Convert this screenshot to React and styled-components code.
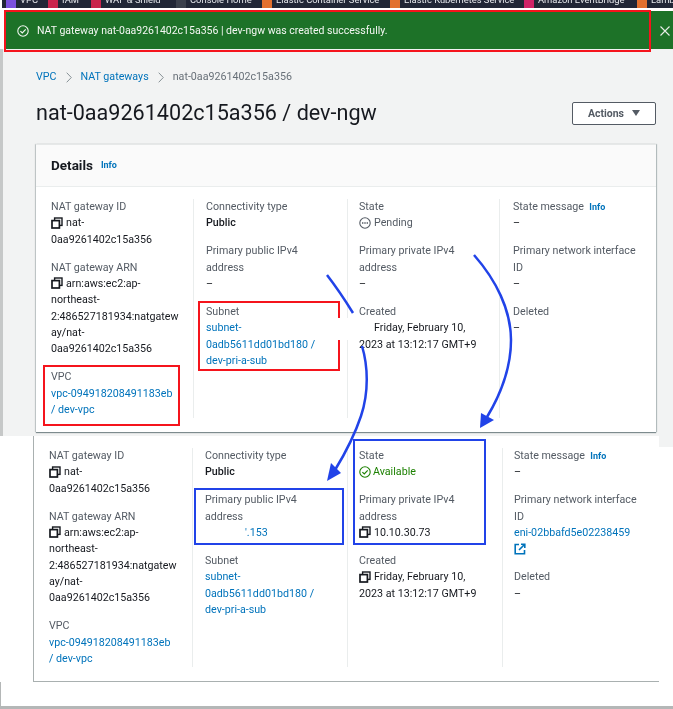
import React from "react";
import styled, { createGlobalStyle } from "styled-components";

const GlobalStyle = createGlobalStyle`
  html, body {
    margin: 0;
    padding: 0;
    background: #fff;
  }
  * {
    box-sizing: border-box;
  }
`;

const Page = styled.div`
  position: relative;
  width: 673px;
  height: 709px;
  overflow: hidden;
  background: #fff;
  font-family: Roboto, "Noto Sans", sans-serif;
  font-size: 10.7px;
  line-height: 16.3px;
  color: #16191f;
  filter: blur(0.35px);
`;

const Nav = styled.div`
  display: flex;
  height: 8px;
  margin-left: 2px;
  padding-left: 4px;
  overflow: hidden;
  background: #212636;
`;

const NavItem = styled.div`
  display: flex;
  flex: none;
  gap: 4px;
  width: ${(p) => p.$w}px;
  height: 8px;
  color: #e6e8ec;
  font-size: 9.4px;
  line-height: 10px;
  white-space: nowrap;

  span {
    margin-top: -5px;
  }
`;

const NavIcon = styled.i`
  flex: none;
  width: 10px;
  height: 8px;
  background: ${(p) => p.$color};
`;

const Banner = styled.div`
  display: flex;
  align-items: center;
  height: 38px;
  margin: 3px 0 0 5px;
  padding: 2px 0 0 12px;
  background: #1d7228;
  color: #f4f7f3;
  font-size: 10.5px;
`;

const BannerText = styled.span`
  margin-left: 6px;
  flex: 1;
`;

const CloseMark = styled.svg`
  width: 10px;
  height: 10px;
  margin-right: 3px;
`;

const Upper = styled.div`
  height: 387px;
  padding: 19px 17px 0 33px;
  border-left: 3px solid #c6c8c8;
  background: #f2f3f3;
`;

const Breadcrumb = styled.div`
  display: flex;
  align-items: center;
  gap: 9px;
  height: 18px;
  color: #687078;
`;

const Crumb = styled.a`
  color: #0073bb;
`;

const Chevron = styled.svg`
  width: 6px;
  height: 11px;
`;

const TitleRow = styled.div`
  display: flex;
  align-items: center;
  justify-content: space-between;
  height: 24px;
  margin-top: 15px;
`;

const Title = styled.h1`
  margin: 0;
  font-size: 21.6px;
  font-weight: 400;
  line-height: 24px;
  white-space: nowrap;
`;

const ActionsButton = styled.button`
  display: flex;
  align-items: center;
  justify-content: center;
  gap: 8px;
  width: 84px;
  height: 23px;
  border: 1.5px solid #545b64;
  border-radius: 2px;
  background: #fff;
  color: #545b64;
  font: 700 10.5px Roboto, sans-serif;
`;

const Caret = styled.i`
  width: 0;
  height: 0;
  border-top: 6px solid #545b64;
  border-left: 4px solid transparent;
  border-right: 4px solid transparent;
`;

const Card = styled.section`
  margin-top: 19px;
  height: 288px;
  background: #fff;
  border-top: 1px solid #e6e8e8;
  box-shadow: 0 1px 1px rgba(0, 28, 36, 0.45), 1px 0 1px rgba(0, 28, 36, 0.2),
    -1px 0 1px rgba(0, 28, 36, 0.15);
`;

const CardHeader = styled.header`
  display: flex;
  align-items: center;
  gap: 8px;
  height: 42px;
  padding-left: 15px;
  background: #fafafa;
  border-bottom: 1px solid #eaeded;
`;

const CardTitle = styled.h2`
  margin: 0;
  font-size: 13.5px;
  font-weight: 700;
`;

const Info = styled.a`
  color: #0073bb;
  font-size: 9px;
  font-weight: 700;
`;

const DetailGrid = styled.div`
  display: grid;
  grid-template-columns: ${(p) => p.$cols};
  padding-top: ${(p) => p.$top}px;
`;

const Column = styled.div`
  display: flex;
  flex-direction: column;
  gap: 11.8px;
  height: 219px;
  padding: 0 12px 0 ${(p) => p.$pad}px;
  border-left: ${(p) => (p.$first ? "none" : "1px solid #eaeded")};
  overflow-wrap: anywhere;
`;

const Field = styled.div``;

const Label = styled.div`
  color: #545b64;
`;

const Value = styled.div`
  font-weight: ${(p) => (p.$bold ? 500 : 400)};
  padding-left: ${(p) => p.$indent || 0}px;
`;

const Link = styled.a`
  color: #0073bb;
`;

const StatusText = styled.span`
  color: ${(p) => p.$color};
`;

const IconSlot = styled.svg`
  display: inline-block;
  width: 12px;
  height: 12px;
  margin-right: ${(p) => p.$gap ?? 3}px;
  vertical-align: -2.5px;
`;

const Lower = styled.div`
  height: 270px;
  background: #fff;
`;

const Panel = styled.section`
  width: 626px;
  height: 246px;
  margin-left: 33px;
  border-left: 1px solid #a9b0b0;
  border-bottom: 1px solid #a9b0b0;
`;

const LowerEdge = styled.div`
  height: 24px;
  border-left: 1px solid #b4b7b7;
`;

const Footer = styled.div`
  height: 3px;
  background: #b4b7b7;
`;

const GrayPatch = styled.div`
  position: absolute;
  left: 659px;
  top: 436px;
  width: 14px;
  height: 11px;
  background: #f2f3f3;
`;

const Callout = styled.div`
  position: absolute;
  left: ${(p) => p.$x}px;
  top: ${(p) => p.$y}px;
  width: ${(p) => p.$w}px;
  height: ${(p) => p.$h}px;
  border: 2.5px solid ${(p) => p.$color};
`;

const WhiteOut = styled.div`
  position: absolute;
  left: 336px;
  top: 318px;
  width: 38px;
  height: 22px;
  background: #fff;
`;

const ArrowLayer = styled.svg`
  position: absolute;
  left: 0;
  top: 0;
  width: 673px;
  height: 709px;
  pointer-events: none;
`;

const RED = "#f5141c";
const BLUE = "#2143e8";

const CopyIcon = () => (
  <IconSlot viewBox="0 0 12 12">
    <rect x="3.6" y="1" width="7.4" height="7.4" fill="none" stroke="#16191f" strokeWidth="1.4" />
    <rect x="1" y="3.6" width="7.4" height="7.4" fill="#fff" stroke="#16191f" strokeWidth="1.7" />
  </IconSlot>
);

const PendingIcon = () => (
  <IconSlot viewBox="0 0 12 12">
    <circle cx="6" cy="6" r="5.2" fill="none" stroke="#545b64" strokeWidth="1.1" />
    <path d="M3 6h6" stroke="#545b64" strokeWidth="1.3" strokeDasharray="1.4 .9" />
  </IconSlot>
);

const CheckIcon = ({ color }) => (
  <IconSlot viewBox="0 0 12 12" $gap={2}>
    <circle cx="6" cy="6" r="5.2" fill="none" stroke={color} strokeWidth="1.1" />
    <path d="M3.4 6.1l1.9 1.9 3.4-3.6" fill="none" stroke={color} strokeWidth="1.2" />
  </IconSlot>
);

const ExternalIcon = () => (
  <IconSlot viewBox="0 0 12 12">
    <path d="M5 1.5H1.2v9.3h9.3V7" fill="none" stroke="#0073bb" strokeWidth="1.6" />
    <path d="M7 1.2h3.8V5M10.5 1.5L5 7" fill="none" stroke="#0073bb" strokeWidth="1.6" />
  </IconSlot>
);

const Detail = ({ label, children }) => (
  <Field>
    <Label>{label}</Label>
    {children}
  </Field>
);

const Dash = () => <Value>–</Value>;

const GatewayColumn = ({ pad }) => (
  <Column $first $pad={pad}>
    <Detail label="NAT gateway ID">
      <Value><CopyIcon />nat-0aa9261402c15a356</Value>
    </Detail>
    <Detail label="NAT gateway ARN">
      <Value><CopyIcon />arn:aws:ec2:ap-northeast-2:486527181934:natgateway/nat-0aa9261402c15a356</Value>
    </Detail>
    <Detail label="VPC">
      <Value><Link>vpc-094918208491183eb<br />/ dev-vpc</Link></Value>
    </Detail>
  </Column>
);

const SubnetField = () => (
  <Detail label="Subnet">
    <Value><Link>subnet-0adb5611dd01bd180 / dev-pri-a-sub</Link></Value>
  </Detail>
);

const CreatedField = () => (
  <Detail label="Created">
    <Value><CopyIcon />Friday, February 10, 2023 at 13:12:17 GMT+9</Value>
  </Detail>
);

const navItems = [
  ["VPC", "#7a4fdc", 42],
  ["IAM", "#c9244c", 43],
  ["WAF & Shield", "#c9244c", 85],
  ["Console Home", "#3a3f4b", 86],
  ["Elastic Container Service", "#e2702e", 128],
  ["Elastic Kubernetes Service", "#e2702e", 134],
  ["Amazon EventBridge", "#cf2367", 113],
  ["Lambda", "#e2702e", 60],
];

export default function App() {
  return (
    <Page>
      <GlobalStyle />
      <Nav>
        {navItems.map(([name, color, w]) => (
          <NavItem key={name} $w={w}>
            <NavIcon $color={color} />
            <span>{name}</span>
          </NavItem>
        ))}
      </Nav>

      <Banner>
        <CheckIcon color="#f4f7f3" />
        <BannerText>NAT gateway nat-0aa9261402c15a356 | dev-ngw was created successfully.</BannerText>
        <CloseMark viewBox="0 0 10 10">
          <path d="M.5.5l9 9M9.5.5l-9 9" stroke="#e8eee8" strokeWidth="1.1" />
        </CloseMark>
      </Banner>

      <Upper>
        <Breadcrumb>
          <Crumb>VPC</Crumb>
          <Chevron viewBox="0 0 6 11"><path d="M.7.7L5.3 5.5.7 10.3" fill="none" stroke="#879196" /></Chevron>
          <Crumb>NAT gateways</Crumb>
          <Chevron viewBox="0 0 6 11"><path d="M.7.7L5.3 5.5.7 10.3" fill="none" stroke="#879196" /></Chevron>
          <span>nat-0aa9261402c15a356</span>
        </Breadcrumb>
        <TitleRow>
          <Title>nat-0aa9261402c15a356 / dev-ngw</Title>
          <ActionsButton>Actions <Caret /></ActionsButton>
        </TitleRow>

        <Card>
          <CardHeader>
            <CardTitle>Details</CardTitle>
            <Info>Info</Info>
          </CardHeader>
          <DetailGrid $cols="157px 154px 152px 157px" $top={12}>
            <GatewayColumn pad={15} />
            <Column $pad={12}>
              <Detail label="Connectivity type"><Value $bold>Public</Value></Detail>
              <Detail label="Primary public IPv4 address"><Dash /></Detail>
              <SubnetField />
            </Column>
            <Column $pad={11}>
              <Detail label="State">
                <Value><PendingIcon /><StatusText $color="#545b64">Pending</StatusText></Value>
              </Detail>
              <Detail label="Primary private IPv4 address"><Dash /></Detail>
              <CreatedField />
            </Column>
            <Column $pad={13}>
              <Detail label={<>State message &nbsp;<Info>Info</Info></>}><Dash /></Detail>
              <Detail label="Primary network interface ID"><Dash /></Detail>
              <Detail label="Deleted"><Dash /></Detail>
            </Column>
          </DetailGrid>
        </Card>
      </Upper>

      <Lower>
        <Panel>
          <DetailGrid $cols="158px 155px 155px 157px" $top={12}>
            <GatewayColumn pad={15} />
            <Column $pad={12}>
              <Detail label="Connectivity type"><Value $bold>Public</Value></Detail>
              <Detail label="Primary public IPv4 address">
                <Value $indent={40}><Link>'.153</Link></Value>
              </Detail>
              <SubnetField />
            </Column>
            <Column $pad={11}>
              <Detail label="State">
                <Value><CheckIcon color="#1d8102" /><StatusText $color="#1d8102">Available</StatusText></Value>
              </Detail>
              <Detail label="Primary private IPv4 address">
                <Value><CopyIcon />10.10.30.73</Value>
              </Detail>
              <CreatedField />
            </Column>
            <Column $pad={11}>
              <Detail label={<>State message &nbsp;<Info>Info</Info></>}><Dash /></Detail>
              <Detail label="Primary network interface ID">
                <Value><Link>eni-02bbafd5e02238459 <ExternalIcon /></Link></Value>
              </Detail>
              <Detail label="Deleted"><Dash /></Detail>
            </Column>
          </DetailGrid>
        </Panel>
        <LowerEdge />
      </Lower>
      <Footer />

      <GrayPatch />
      <Callout $x={4} $y={10} $w={647} $h={42} $color={RED} />
      <Callout $x={43} $y={365} $w={137} $h={61} $color={RED} />
      <Callout $x={198} $y={301} $w={142} $h={70} $color={RED} />
      <WhiteOut />
      <Callout $x={194} $y={488} $w={150} $h={57} $color={BLUE} />
      <Callout $x={353} $y={439} $w={133} $h={106} $color={BLUE} />

      <ArrowLayer viewBox="0 0 673 709">
        <path d="M327 275C337 288 345 300 353 313" fill="none" stroke={BLUE} strokeWidth="2.5" />
        <path d="M362 346C368 366 369 392 361 416C355 434 346 452 335 470" fill="none" stroke={BLUE} strokeWidth="2.5" />
        <path d="M327 481L341 473L331 463Z" fill={BLUE} />
        <path d="M474 255C496 280 511 310 511 340C511 368 502 392 487 417" fill="none" stroke={BLUE} strokeWidth="2.5" />
        <path d="M480 428L494 420L481 413Z" fill={BLUE} />
      </ArrowLayer>
    </Page>
  );
}
